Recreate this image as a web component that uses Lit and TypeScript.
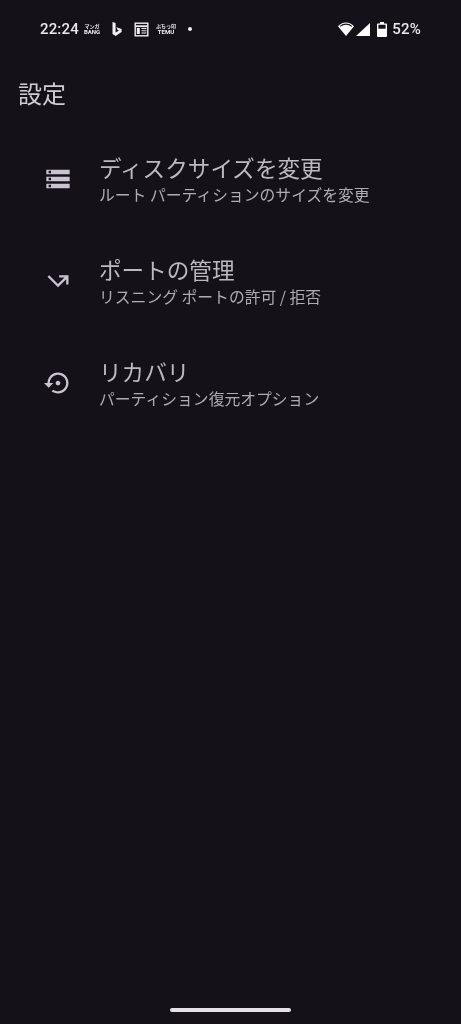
import { LitElement, html, css, svg } from "lit";
import { customElement } from "lit/decorators.js";

const ICONS = {
  storage: svg`<path d="M2 20h20v-4H2v4zm2-3h2v2H4v-2zM2 4v4h20V4H2zm4 3H4V5h2v2zm-4 7h20v-4H2v4zm2-3h2v2H4v-2z"/>`,
  port: svg`<path d="M3 8.41l9 9 7-7V15h2V7h-8v2h4.59L12 14.59 4.41 7 3 8.41z"/>`,
  restore: svg`<path d="M14 12c0-1.1-.9-2-2-2s-2 .9-2 2 .9 2 2 2 2-.9 2-2zm-2-9c-4.97 0-9 4.03-9 9H0l4 4 4-4H5c0-3.87 3.13-7 7-7s7 3.13 7 7-3.13 7-7 7c-1.51 0-2.91-.49-4.06-1.3l-1.42 1.44C8.04 20.3 9.94 21 12 21c4.97 0 9-4.03 9-9s-4.03-9-9-9z"/>`,
};

const ITEMS = [
  { icon: ICONS.storage, title: "ディスクサイズを変更", sub: "ルート パーティションのサイズを変更" },
  { icon: ICONS.port, title: "ポートの管理", sub: "リスニング ポートの許可 / 拒否" },
  { icon: ICONS.restore, title: "リカバリ", sub: "パーティション復元オプション" },
];

@customElement("app-root")
export class AppRoot extends LitElement {
  static styles = css`
    :host {
      display: flex;
      flex-direction: column;
      width: 461px;
      height: 1024px;
      background: #141218;
      font-family: "Noto Sans CJK JP", "Roboto", sans-serif;
      overflow: hidden;
    }
    .status {
      height: 58px;
      flex: none;
      display: flex;
      align-items: center;
      padding: 0 40px;
      color: #f1eff3;
      font-family: Roboto, sans-serif;
      font-size: 15px;
      font-weight: 400;
      will-change: transform;
    }
    .time { letter-spacing: 0.15px; width: 43px; font-weight: 500; color: #e9e7eb; }
    .mini {
      width: 18px;
      display: flex;
      flex-direction: column;
      align-items: center;
      font-size: 6px;
      line-height: 6.5px;
      font-weight: 700;
      white-space: nowrap;
    }
    .mini .top { font-size: 5px; font-family: "Noto Sans CJK JP", sans-serif; line-height: 6px; }
    .bing { width: 12px; height: 15px; margin-left: 10px; fill: #f1eff3; }
    .news { width: 15px; height: 15px; margin-left: 11px; }
    .temu { margin-left: 8px; }
    .dot { width: 4px; height: 4px; border-radius: 50%; background: #f1eff3; margin-left: 13px; }
    .spacer { flex: 1; }
    .sys { fill: #fff; display: block; }
    .wifi { width: 16px; height: 14px; }
    .signal { width: 14px; height: 13px; margin-left: 2px; margin-top: 1px; }
    .battery { width: 10px; height: 15px; margin-left: 7px; }
    .pct { margin-left: 5px; letter-spacing: 0.2px; font-weight: 500; color: #e9e7eb; }
    .heading {
      margin: 18.5px 0 0 18px;
      color: #d0ccd3;
      font-size: 24px;
      font-weight: 400;
      line-height: 32px;
      flex: none;
      will-change: transform;
    }
    .list { display: flex; flex-direction: column; margin-top: 19px; }
    .row {
      height: 102px;
      display: flex;
      align-items: center;
      padding-left: 44px;
      gap: 27px;
    }
    .ico { width: 28px; height: 28px; fill: #cac4d0; flex: none; }
    .text { display: flex; flex-direction: column; will-change: transform; }
    .title {
      font-size: 22.6px;
      line-height: 33px;
      color: #bdb9c1;
      white-space: nowrap;
    }
    .sub {
      font-size: 15.8px;
      line-height: 23px;
      margin-top: -1px;
      color: #b0acb5;
      white-space: nowrap;
    }
    .grow { flex: 1; }
    .nav {
      flex: none;
      height: 24px;
      display: flex;
      justify-content: center;
      align-items: flex-start;
    }
    .pill {
      width: 121px;
      height: 4px;
      margin-top: 8px;
      border-radius: 2px;
      background: #e6e1e9;
    }
  `;

  render() {
    return html`
      <div class="status">
        <span class="time">22:24</span>
        <span class="mini"><span class="top">マンガ</span><span>BANG</span></span>
        <svg class="bing" viewBox="0 0 12 15"><path d="M1.5 0L4.6 1.1V10.4L8 8.5 6.4 7.7 5.4 5.3 10.6 7.1V9.9L4.6 13.9 1.5 12.1Z"/></svg>
        <svg class="news" viewBox="0 0 15 15" fill="none" stroke="#f1eff3"><rect x="1.2" y="1.2" width="12.6" height="12.6" stroke-width="1.4"/><path d="M1.5 4.2H13.5" stroke-width="1.8"/><path d="M7.5 6.5H12.5M7.5 8.7H12.5M7.5 11H12.5" stroke-width="1.1"/><rect x="2.8" y="6" width="3" height="6" fill="#f1eff3" stroke="none"/></svg>
        <span class="mini temu"><span class="top">ぷちっ印</span><span>TEMU</span></span>
        <span class="dot"></span>
        <span class="spacer"></span>
        <svg class="sys wifi" viewBox="0 0 16 14">
          <path d="M8 14L0 4.2C2.1 1.9 4.9.5 8 .5s5.9 1.4 8 3.7Z"/>
          <path d="M2.2 4.4C3.8 3 5.8 2.1 8 2.1s4.2.9 5.8 2.3" fill="none" stroke="#141218" stroke-width="1.1"/>
        </svg>
        <svg class="sys signal" viewBox="0 0 14 13"><path d="M14 0V13H0Z"/></svg>
        <svg class="sys battery" viewBox="0 0 10 15"><path fill-rule="evenodd" d="M3 0h4v1.4H9a1 1 0 0 1 1 1V14a1 1 0 0 1-1 1H1a1 1 0 0 1-1-1V2.4a1 1 0 0 1 1-1h2ZM1.4 2.8v3.9h7.2V2.8Z"/></svg>
        <span class="pct">52%</span>
      </div>
      <div class="heading">設定</div>
      <div class="list">
        ${ITEMS.map(
          (it) => html`
            <div class="row">
              <svg class="ico" viewBox="0 0 24 24">${it.icon}</svg>
              <div class="text">
                <span class="title">${it.title}</span>
                <span class="sub">${it.sub}</span>
              </div>
            </div>
          `
        )}
      </div>
      <div class="grow"></div>
      <div class="nav"><div class="pill"></div></div>
    `;
  }
}
